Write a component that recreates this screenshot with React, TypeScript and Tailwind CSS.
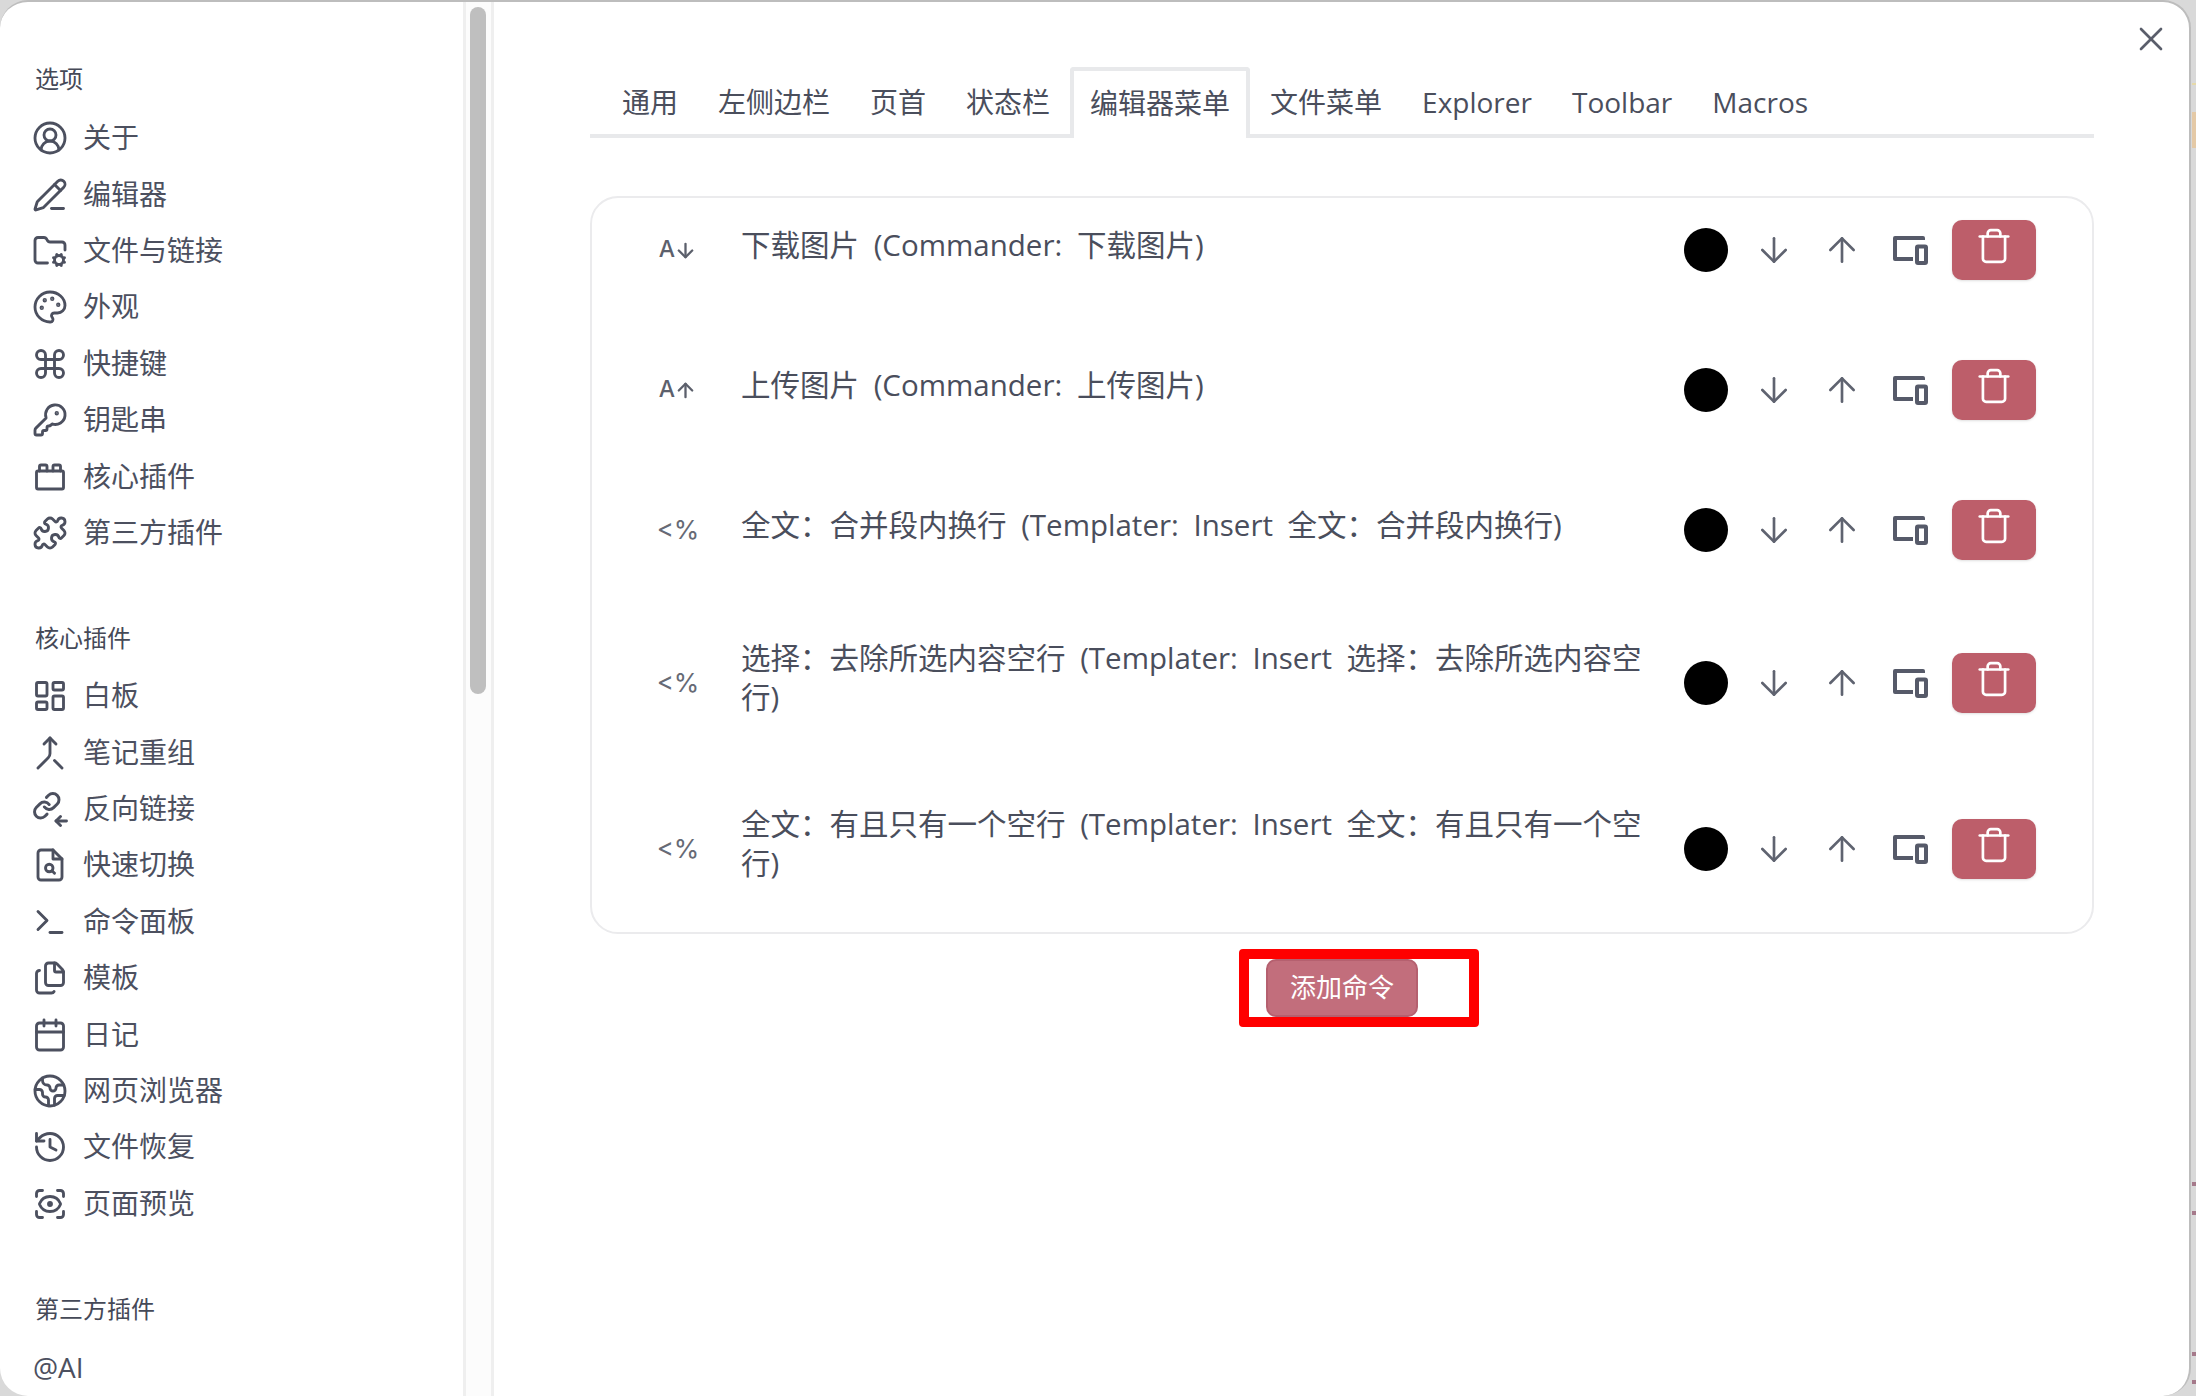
import React from "react";
import {
  ArrowDown,
  ArrowUp,
  Calendar,
  CircleUserRound,
  Command,
  Earth,
  Files,
  FolderCog,
  History,
  KeyRound,
  LayoutDashboard,
  Merge,
  Palette,
  PencilLine,
  Puzzle,
  ScanEye,
  Terminal,
  ToyBrick,
  Trash,
  X,
} from "lucide-react";

const LinksComingIn: React.FC<{ size: number; strokeWidth: number }> = ({ size, strokeWidth }) => (
  <svg
    width={size}
    height={size}
    viewBox="0 0 24 24"
    fill="none"
    stroke="currentColor"
    strokeWidth={strokeWidth}
    strokeLinecap="round"
    strokeLinejoin="round"
  >
    <g transform="translate(0 0) scale(0.82)" strokeWidth={2.4}>
      <path d="M10 13a5 5 0 0 0 7.54.54l3-3a5 5 0 0 0-7.07-7.07l-1.72 1.71" />
      <path d="M14 11a5 5 0 0 0-7.54-.54l-3 3a5 5 0 0 0 7.07 7.07l1.71-1.71" />
    </g>
    <path d="M16 20h7" />
    <path d="m19 17-3 3 3 3" />
  </svg>
);

const FileSearchCenter: React.FC<{ size: number; strokeWidth: number }> = ({ size, strokeWidth }) => (
  <svg
    width={size}
    height={size}
    viewBox="0 0 24 24"
    fill="none"
    stroke="currentColor"
    strokeWidth={strokeWidth}
    strokeLinecap="round"
    strokeLinejoin="round"
  >
    <path d="M14 2H6a2 2 0 0 0-2 2v16a2 2 0 0 0 2 2h12a2 2 0 0 0 2-2V8z" />
    <path d="M14 2v6h6" />
    <circle cx="11.5" cy="14" r="2.5" />
    <path d="M13.5 16l1.5 1.5" />
  </svg>
);

const DevicesIcon = () => (
  <svg width="36" height="30" viewBox="0 0 36 30" fill="none" stroke="#565a69" strokeWidth="4" strokeLinejoin="round">
    <path d="M31 5V3H3v21h18" />
    <rect x="25" y="11.5" width="9" height="16.5" rx="1" />
  </svg>
);

const optionItems = [
  { label: "关于", icon: CircleUserRound },
  { label: "编辑器", icon: PencilLine },
  { label: "文件与链接", icon: FolderCog },
  { label: "外观", icon: Palette },
  { label: "快捷键", icon: Command },
  { label: "钥匙串", icon: KeyRound },
  { label: "核心插件", icon: ToyBrick },
  { label: "第三方插件", icon: Puzzle },
];

const corePluginItems = [
  { label: "白板", icon: LayoutDashboard },
  { label: "笔记重组", icon: Merge },
  { label: "反向链接", icon: LinksComingIn },
  { label: "快速切换", icon: FileSearchCenter },
  { label: "命令面板", icon: Terminal },
  { label: "模板", icon: Files },
  { label: "日记", icon: Calendar },
  { label: "网页浏览器", icon: Earth },
  { label: "文件恢复", icon: History },
  { label: "页面预览", icon: ScanEye },
];

const tabs = ["通用", "左侧边栏", "页首", "状态栏", "编辑器菜单", "文件菜单", "Explorer", "Toolbar", "Macros"];

const commands = [
  { glyph: "down", text: "下载图片 (Commander: 下载图片)" },
  { glyph: "up", text: "上传图片 (Commander: 上传图片)" },
  { glyph: "tpl", text: "全文：合并段内换行 (Templater: Insert 全文：合并段内换行)" },
  { glyph: "tpl", text: "选择：去除所选内容空行 (Templater: Insert 选择：去除所选内容空行)" },
  { glyph: "tpl", text: "全文：有且只有一个空行 (Templater: Insert 全文：有且只有一个空行)" },
];

const SideItem: React.FC<{ label: string; icon: React.ComponentType<any> }> = ({ label, icon: Icon }) => (
  <div className="flex h-[56.4px] items-center gap-[15px] pl-[32px] text-[28px] text-[#4c505f]">
    <Icon size={36} strokeWidth={1.9} />
    <span className="mb-[2px]">{label}</span>
  </div>
);

const SideHeader: React.FC<{ label: string; className: string }> = ({ label, className }) => (
  <div className={`flex h-[40px] items-center pl-[35px] text-[24px] text-[#454957] ${className}`}>{label}</div>
);

const CommandGlyph: React.FC<{ glyph: string }> = ({ glyph }) => {
  if (glyph === "tpl") {
    return <span className="font-['Inter',sans-serif] text-[26px] text-[#666a75]">&lt;%</span>;
  }
  return (
    <span className="flex items-center font-['Inter',sans-serif] text-[23px] font-medium text-[#5c606c]">
      A
      {glyph === "down" ? (
        <ArrowDown size={23} strokeWidth={2.4} className="-ml-[1px] mt-[2px]" />
      ) : (
        <ArrowUp size={23} strokeWidth={2.4} className="-ml-[1px] mt-[2px]" />
      )}
    </span>
  );
};

const CommandRow: React.FC<{ glyph: string; text: string }> = ({ glyph, text }) => (
  <div className="flex items-center py-[22px] pl-[51px] pr-[56px]">
    <div className="mb-[2px] flex w-[70px] shrink-0 justify-center">
      <CommandGlyph glyph={glyph} />
    </div>
    <div className="-mt-[2px] mb-[10px] ml-[28px] w-[914px] shrink-0 text-[29.5px] leading-[39px] text-[#4a4e5c] [word-spacing:7px]">
      {text}
    </div>
    <div className="ml-[29px] h-[44px] w-[44px] shrink-0 rounded-full bg-black" />
    <div className="ml-[12px] flex w-[68px] shrink-0 justify-center text-[#5f6370]">
      <ArrowDown size={40} strokeWidth={1.6} />
    </div>
    <div className="flex w-[68px] shrink-0 justify-center text-[#5f6370]">
      <ArrowUp size={40} strokeWidth={1.6} />
    </div>
    <div className="flex w-[68px] shrink-0 justify-center">
      <DevicesIcon />
    </div>
    <div className="ml-[8px] flex h-[60px] w-[84px] shrink-0 items-start justify-center rounded-[10px] bg-[#bd5e6a] pt-[7px] text-white shadow-sm">
      <Trash size={38} strokeWidth={1.7} />
    </div>
  </div>
);

export default function App() {
  return (
    <div className="relative h-[1396px] w-[2196px] overflow-hidden bg-[#d9d9d9] font-['Open_Sans','Noto_Sans_CJK_SC',sans-serif]">
      {/* bits of the window behind the modal */}
      <div className="absolute right-0 top-[83px] h-[2px] w-[4px] bg-[#e6d9a8]" />
      <div className="absolute right-0 top-[112px] h-[36px] w-[4px] bg-[#e4c9a6]" />
      <div className="absolute right-0 top-[1182px] h-[4px] w-[4px] bg-[#a5798a]" />
      <div className="absolute right-0 top-[1211px] h-[4px] w-[4px] bg-[#a5798a]" />
      <div className="absolute right-0 top-[1352px] h-[4px] w-[4px] bg-[#a5798a]" />
      <div className="absolute right-0 top-[1380px] h-[4px] w-[4px] bg-[#a5798a]" />

      <div className="flex h-full w-[2191px] overflow-hidden rounded-[28px] border-r-[2px] border-t-[2px] border-[#bdbdbd] bg-white">
        {/* sidebar */}
        <div className="h-full w-[463px] shrink-0 overflow-hidden pt-[57px]">
          <SideHeader label="选项" className="mb-[11px]" />
          {optionItems.map((item) => (
            <SideItem key={item.label} label={item.label} icon={item.icon} />
          ))}
          <SideHeader label="核心插件" className="mb-[10px] mt-[57px]" />
          {corePluginItems.map((item) => (
            <SideItem key={item.label} label={item.label} icon={item.icon} />
          ))}
          <SideHeader label="第三方插件" className="mb-[10px] mt-[57px]" />
          <div className="flex h-[56px] items-center pl-[33px] text-[28px] text-[#4c505f]">@AI</div>
        </div>

        {/* scrollbar */}
        <div className="h-full w-[31px] shrink-0 border-x-[3px] border-[#efefef] bg-[#fcfcfc] pl-[4px] pt-[5px]">
          <div className="h-[687px] w-[16px] rounded-full bg-[#bfbfbf]" />
        </div>

        {/* content */}
        <div className="relative min-w-0 flex-1 pl-[96px] pt-[65px]">
          <button className="absolute right-[18px] top-[17px] text-[#5a5e6b]">
            <X size={40} strokeWidth={1.6} />
          </button>

          <div className="flex h-[71px] w-[1504px] border-b-[4px] border-[#e8e9eb] pl-[12px] text-[28px] text-[#4a4e5c]">
            {tabs.map((tab) =>
              tab === "编辑器菜单" ? (
                <div
                  key={tab}
                  className="-mb-[4px] flex h-[71px] items-center rounded-t-[4px] border-x-[4px] border-t-[4px] border-[#e8e9eb] bg-white px-[16px] pb-[4px]"
                >
                  {tab}
                </div>
              ) : (
                <div key={tab} className="flex h-[67px] items-center px-[20px] pt-[2px]">
                  {tab}
                </div>
              ),
            )}
          </div>

          <div className="mt-[58px] flex w-[1504px] flex-col gap-[36px] rounded-[28px] border-[2px] border-[#ebebed] pb-[18px]">
            {commands.map((command) => (
              <CommandRow key={command.text} glyph={command.glyph} text={command.text} />
            ))}
          </div>

          <div className="mt-[25px] flex w-[1504px] justify-center">
            <div className="relative">
              <button className="flex h-[58px] w-[152px] items-center justify-center rounded-[10px] border-[2px] border-[#b5606f] bg-[#c26e7c] pb-[2px] text-[26px] text-white">
                添加命令
              </button>
              {/* red annotation box */}
              <div className="absolute -left-[27px] -top-[10px] h-[78px] w-[240px] rounded-[4px] border-[10px] border-[#ff0000]" />
            </div>
          </div>
        </div>
      </div>
    </div>
  );
}
